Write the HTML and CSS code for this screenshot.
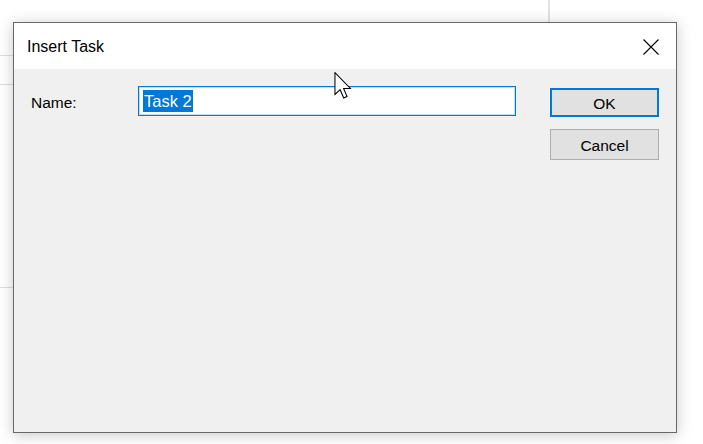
FILE: index.html
```html
<!DOCTYPE html>
<html>
<head>
    <title>Insert Task</title>
    <link rel="stylesheet" href="styles.css">
</head>
<body>
    <div class="desk">
        <!-- grid lines of the window behind the dialog -->
        <div class="bgline h1"></div>
        <div class="bgline h2"></div>
        <div class="bgline h3"></div>
        <div class="bgline v1"></div>

        <section class="dialog">
            <header class="titlebar">
                <span class="title">Insert Task</span>
                <svg class="close" width="16" height="16" viewBox="0 0 16 16">
                    <path d="M0.5 0.5 L15.5 15.5 M15.5 0.5 L0.5 15.5" stroke="#000" stroke-width="1.1" fill="none"/>
                </svg>
            </header>
            <div class="content">
                <label class="lbl">Name:</label>
                <div class="field"><span class="sel">Task 2</span></div>
                <div class="buttons">
                    <button class="btn default">OK</button>
                    <button class="btn">Cancel</button>
                </div>
            </div>
        </section>

        <svg class="pointer" width="18" height="27" viewBox="0 0 13.5 21">
            <path d="M0.5 0.5 L0.5 17.5 L4.5 13.8 L7.3 20.2 L9.9 19.1 L7.2 12.8 L12.5 12.8 Z" fill="#fff" stroke="#000" stroke-width="0.8" stroke-linejoin="miter"/>
        </svg>
    </div>
</body>
</html>
```

FILE: styles.css
```css
html, body {
    margin: 0;
    background: #fff;
}
.desk {
    position: relative;
    width: 703px;
    height: 444px;
    padding: 22px 0 0 13px;
    box-sizing: border-box;
    font-family: "Liberation Sans", Arial, sans-serif;
    overflow: hidden;
}
.bgline {
    position: absolute;
    background: #dedede;
}
.h1 { left: 0; top: 55px; width: 14px; height: 1px; }
.h2 { left: 0; top: 84px; width: 14px; height: 1px; }
.h3 { left: 0; top: 287px; width: 14px; height: 1px; }
.v1 { left: 548px; top: 0; width: 2px; height: 22px; background: #e2e2e2; }

.dialog {
    position: relative;
    width: 664px;
    height: 411px;
    box-sizing: border-box;
    border: 1px solid #686868;
    background: #f0f0f0;
    box-shadow: 0 2px 14px rgba(0, 0, 0, 0.22);
}
.titlebar {
    display: flex;
    align-items: center;
    justify-content: space-between;
    height: 46px;
    background: #fff;
    padding: 0 17px 0 13px;
}
.title {
    font-size: 16px;
    color: #000;
    margin-top: 1px;
}
.close {
    display: block;
    margin-top: 1px;
}
.content {
    display: flex;
    align-items: flex-start;
    padding: 17px 17px 0 17px;
}
.lbl {
    width: 107px;
    height: 30px;
    line-height: 33px;
    font-size: 15.5px;
    color: #000;
}
.field {
    width: 378px;
    height: 30px;
    box-sizing: border-box;
    border: 1px solid #0078d7;
    box-shadow: inset 0 0 0 1px rgba(0, 120, 215, 0.25);
    background: #fff;
    padding: 3px 0 0 4px;
}
.sel {
    display: inline-block;
    height: 22px;
    line-height: 23px;
    font-size: 16.5px;
    background: #0078d7;
    color: #fff;
    padding: 0 1px;
}
.buttons {
    display: flex;
    flex-direction: column;
    gap: 12px;
    margin: 2px 0 0 34px;
}
.btn {
    width: 109px;
    height: 31px;
    box-sizing: border-box;
    border: 1px solid #adadad;
    background: #e1e1e1;
    font: 15.5px "Liberation Sans", Arial, sans-serif;
    color: #000;
    padding: 2px 0 0;
}
.btn.default {
    height: 29px;
    border: 2px solid #0078d7;
}
.pointer {
    position: absolute;
    left: 334px;
    top: 72px;
}
```
